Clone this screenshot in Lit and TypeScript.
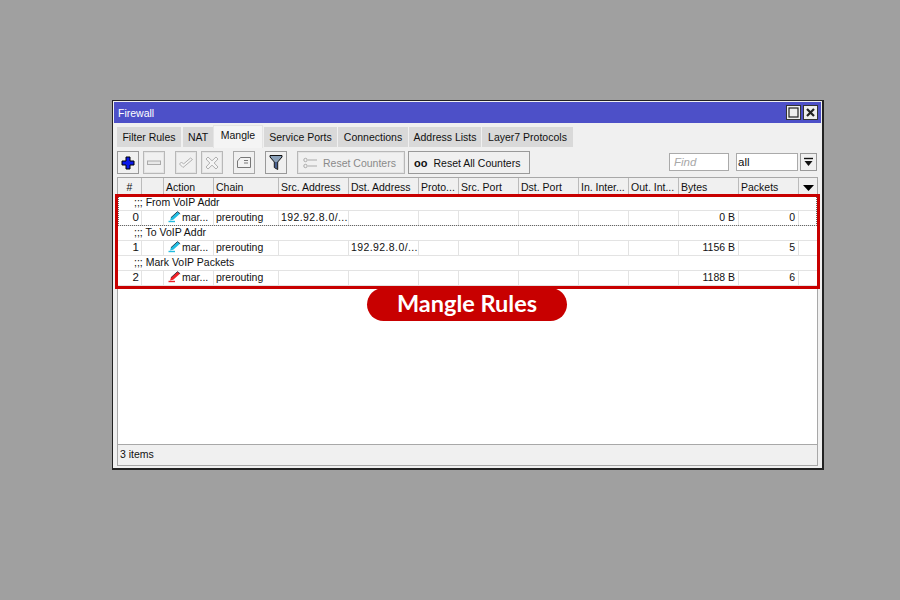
import { LitElement, html, css, svg } from "lit";
import { customElement } from "lit/decorators.js";

const cols = [
  ["#", "c"], ["", ""], ["Action", ""], ["Chain", ""], ["Src. Address", ""], ["Dst. Address", ""],
  ["Proto...", ""], ["Src. Port", ""], ["Dst. Port", ""], ["In. Inter...", ""], ["Out. Int...", ""], ["Bytes", ""], ["Packets", ""],
];
const rows = [
  { c: ";;; From VoIP Addr", n: "0", col: "#22bce0", src: "192.92.8.0/...", dst: "", b: "0 B", p: "0", sel: true },
  { c: ";;; To VoIP Addr", n: "1", col: "#22bce0", src: "", dst: "192.92.8.0/...", b: "1156 B", p: "5", sel: false },
  { c: ";;; Mark VoIP Packets", n: "2", col: "#ee2228", src: "", dst: "", b: "1188 B", p: "6", sel: false },
];
const tabs: [string, number, number][] = [
  ["Filter Rules", 64, 2], ["NAT", 30, 0], ["Mangle", 50, 1], ["Service Ports", 73, 1],
  ["Connections", 70, 1], ["Address Lists", 72, 1], ["Layer7 Protocols", 91, 0],
];

const pencil = (c: string) => html`<svg class="pen" width="13" height="12" viewBox="0 0 13 12">
  <path d="M0.5 10.5H7" stroke="${c}" stroke-width="1.4" fill="none"/>
  <path d="M2 9.6L3 6.6L9.5 .8L12 2.8L5.2 8.8Z" fill="${c}"/>
  <path d="M3 6.6L9.5 .6L12.2 2.8" fill="none" stroke="#123" stroke-width=".8"/>
</svg>`;

@customElement("app-root")
export class AppRoot extends LitElement {
  static styles = css`
    :host { display: block; width: 900px; height: 600px; background: #a0a0a0; overflow: hidden;
      font: 10.5px "Liberation Sans", Arial, sans-serif; color: #111; padding: 100px 0 0 112px; box-sizing: border-box; white-space: nowrap; }
    .win { width: 712px; height: 370px; box-sizing: border-box; border: 1px solid #222; border-right-width: 2px; border-bottom-width: 2px;
      background: #f0f0f0; display: flex; flex-direction: column; padding: 1px; }
    .title { height: 21px; flex: none; background: #4d50c8; color: #fff; display: flex; align-items: center; justify-content: space-between;
      padding: 0 3px 0 4px; }
    .ctrls { display: flex; gap: 2px; }
    .ctrl { width: 15px; height: 15px; background: #eee; border: 1px solid #333; box-sizing: border-box; display: flex; align-items: center; justify-content: center; }
    .tabs { display: flex; height: 25px; flex: none; padding: 2px 0 0 3px; box-sizing: border-box; align-items: flex-end; }
    .tab { height: 20px; margin-bottom: 1px; background: #d9d9d9; display: flex; align-items: center; justify-content: center; box-sizing: border-box; }
    .tab.on { background: #f4f4f4; height: 23px; margin-bottom: 0; border: 1px solid #e4e4e4; border-bottom: 0; padding-bottom: 4px; }
    .tools { display: flex; height: 29px; flex: none; align-items: flex-start; padding: 3px 0 0 3px; box-sizing: border-box; }
    .btn { width: 22px; height: 23px; box-sizing: border-box; border: 1px solid #a8a8a8; background: #f0f0f0; display: flex; align-items: center; justify-content: center; flex: none; }
    .btn.dis { border-color: #b8b8b8; box-shadow: inset 0 0 0 1px #e4e4e4; }
    .btn.en { border-color: #999; }
    .txt { width: auto; gap: 6px; justify-content: flex-start; padding-left: 5px; }
    .dis.txt { color: #8a8a8a; width: 108px; }
    .all { width: 122px; margin-left: 3px; padding-left: 5px; gap: 6px; border-color: #999; }
    .oo { font-weight: 700; font-size: 11px; }
    .spring { flex: 1; }
    .input { height: 18px; margin-top: 2px; box-sizing: border-box; border: 1px solid #aaa; background: #fff; padding: 0 1px; display: flex; align-items: center; font-size: 11.5px; }
    .find { width: 60px; color: #a8a8a8; font-style: italic; margin-right: 7px; padding-left: 4px; }
    .sel { width: 62px; color: #111; margin-right: 2px; }
    .dd { width: 17px; height: 18px; margin-top: 2px; margin-right: 4px; border-color: #999; }
    .panel { position: relative; flex: 1; margin: 0 3px 0 3px; border: 1px solid #a8a8a8; background: #fff; display: flex; flex-direction: column; min-height: 0; }
    .head, .row { display: grid; grid-template-columns: 24px 22px 50px 65px 70px 70px 40px 60px 60px 50px 50px 60px 60px 1fr; }
    .head { height: 17px; background: #f0f0f0; flex: none; border-bottom: 1px solid #ddd; }
    .th { border-right: 1px solid #bbb; padding: 3px 0 0 2px; overflow: hidden; box-sizing: border-box; }
    .th.c { text-align: center; padding-left: 0; }
    .th.last { border-right: 0; display: flex; justify-content: center; align-items: center; padding: 2px 0 0; }
    .list { flex: 1; min-height: 0; }
    .cm { height: 14px; padding-left: 16px; line-height: 13px; box-sizing: border-box; }
    .row { height: 16px; border-top: 1px solid #e3e3e3; border-bottom: 1px solid #e3e3e3; box-sizing: border-box; }
    .td { border-right: 1px solid #e3e3e3; padding: 0 2px; line-height: 13px; overflow: hidden; box-sizing: border-box; }
    .td.r { text-align: right; padding-right: 3px; }
    .td.c { text-align: right; padding-right: 2px; font-size: 11.5px; }
    .td.a { display: flex; align-items: flex-start; gap: 1px; padding-left: 4px; }
    .ip { letter-spacing: .4px; }
    .pen { flex: none; }
    .td.e { border-right: 0; }
    .focus { outline: 1px dotted #666; outline-offset: -1px; }
    .status { height: 18px; padding-bottom: 2px; flex: none; border-top: 1px solid #a8a8a8; background: #f0f0f0; padding-left: 2px; display: flex; align-items: center; }
    .box { position: absolute; left: -3px; top: 16px; width: 705px; height: 95px; border: 3px solid #c80000; box-sizing: border-box; pointer-events: none; }
    .pill { position: absolute; left: 249px; top: 110px; width: 200px; height: 33px; padding-bottom: 3px; box-sizing: border-box; border-radius: 17px; background: #c80000; color: #fff;
      font: 700 23.5px Lato, sans-serif; display: flex; align-items: center; justify-content: center; }
    .foot { height: 1px; flex: none; }
  `;

  render() {
    const s = (w: number, h: number, body: unknown) => html`<svg width="${w}" height="${h}" viewBox="0 0 ${w} ${h}">${body}</svg>`;
    return html`<div class="win">
      <div class="title"><span>Firewall</span>
        <div class="ctrls">
          <div class="ctrl">${s(11, 11, svg`<rect x="1" y="1" width="9" height="9" fill="none" stroke="#222" stroke-width="1.2"/>`)}</div>
          <div class="ctrl">${s(11, 11, svg`<path d="M2 2L9 9M9 2L2 9" stroke="#222" stroke-width="2.2"/>`)}</div>
        </div>
      </div>
      <div class="tabs">
        ${tabs.map(([t, w, g], i) => html`<div class="tab ${i === 2 ? "on" : ""}" style="width:${w}px;margin-right:${g}px">${t}</div>`)}
      </div>
      <div class="tools">
        <div class="btn en">${s(16, 16, svg`<path d="M6 2H10V6H14V10H10V14H6V10H2V6H6Z" fill="#0a18ec" stroke="#000" stroke-width="1"/>`)}</div>
        <div class="btn dis" style="margin-left:4px">${s(16, 8, svg`<rect x="1.5" y="2" width="13" height="3.5" fill="#e8e8e8" stroke="#aaa"/>`)}</div>
        <div class="btn dis" style="margin-left:10px">${s(16, 14, svg`<path d="M1.5 8L5 11.5L14.5 3.5L12.5 2L5.5 8L3.5 6Z" fill="#f4f4f4" stroke="#b0b0b0"/>`)}</div>
        <div class="btn dis" style="margin-left:4px">${s(14, 14, svg`<path d="M1 3L3 1L7 4.8L11 1L13 3L9.2 7L13 11L11 13L7 9.2L3 13L1 11L4.8 7Z" fill="#f4f4f4" stroke="#b0b0b0"/>`)}</div>
        <div class="btn" style="margin-left:10px">${s(14, 11, svg`<path d="M.5 10.5V4L3.5 .5H13.5V10.5Z" fill="#f2f2f2" stroke="#777"/><path d="M7 3.5H11M7 6H11" stroke="#777"/>`)}</div>
        <div class="btn en" style="margin-left:10px">${s(14, 17, svg`<path d="M1 1.5H13V3L8.7 8V15.5L5.3 13.5V8L1 3Z" fill="#8aa0b8" stroke="#111"/><path d="M7 8V14" stroke="#334a80" stroke-width="1.5"/>`)}</div>
        <div class="btn txt dis" style="margin-left:10px">${s(14, 12, svg`<circle cx="2.5" cy="3" r="1.7" fill="none" stroke="#aaa"/><circle cx="2.5" cy="9" r="1.7" fill="none" stroke="#aaa"/><path d="M5 3H14M5 9H14" stroke="#aaa"/>`)}Reset Counters</div>
        <div class="btn txt all"><span class="oo">oo</span>Reset All Counters</div>
        <div class="spring"></div>
        <div class="input find">Find</div>
        <div class="input sel">all</div>
        <div class="btn dd">${s(11, 11, svg`<path d="M1 1.5H10" stroke="#111" stroke-width="1.4"/><path d="M1.5 4H9.5L5.5 9Z" fill="#111"/>`)}</div>
      </div>
      <div class="panel">
        <div class="head">
          ${cols.map(([t, k]) => html`<div class="th ${k}">${t}</div>`)}
          <div class="th last">${s(11, 6, svg`<path d="M0 0H11L5.5 6Z" fill="#000"/>`)}</div>
        </div>
        <div class="list">
          ${rows.map((r) => html`<div class="${r.sel ? "focus" : ""}">
            <div class="cm">${r.c}</div>
            <div class="row">
              <div class="td c">${r.n}</div><div class="td"></div>
              <div class="td a">${pencil(r.col)}<span>mar...</span></div>
              <div class="td">prerouting</div>
              <div class="td ip">${r.src}</div><div class="td ip">${r.dst}</div>
              <div class="td"></div><div class="td"></div><div class="td"></div><div class="td"></div><div class="td"></div>
              <div class="td r">${r.b}</div><div class="td r">${r.p}</div><div class="td e"></div>
            </div></div>`)}
        </div>
        <div class="status">3 items</div>
        <div class="box"></div>
        <div class="pill">Mangle Rules</div>
      </div>
      <div class="foot"></div>
    </div>`;
  }
}
